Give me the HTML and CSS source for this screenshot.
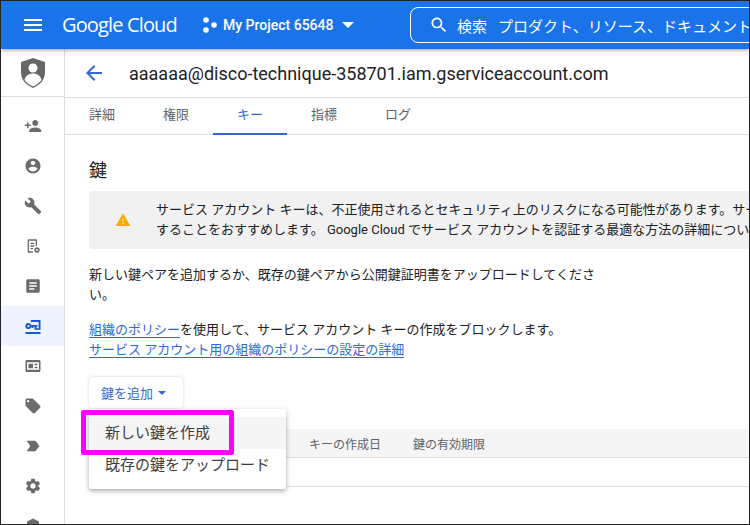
FILE: index.html
```html
<!DOCTYPE html>
<html lang="ja">
<head>
<meta charset="UTF-8">
<title>Service account keys</title>
<link rel="stylesheet" href="styles.css">
</head>
<body>
<div class="frame">
  <header class="topbar">
    <svg class="menu-icon" viewBox="0 0 18 12"><path d="M0 0h18v2H0zM0 5h18v2H0zM0 10h18v2H0z"/></svg>
    <span class="logo">Google Cloud</span>
    <svg class="project-icon" viewBox="0 0 14 16"><circle cx="3" cy="3" r="2.8"/><circle cx="11" cy="8" r="2.8"/><circle cx="3" cy="13" r="2.8"/></svg>
    <span class="project-name">My Project 65648</span>
    <span class="caret-white"></span>
    <div class="search">
      <svg class="search-icon" viewBox="0 0 24 24"><path d="M15.5 14h-.79l-.28-.27C15.41 12.59 16 11.11 16 9.5 16 5.91 13.09 3 9.5 3S3 5.91 3 9.5 5.91 16 9.5 16c1.61 0 3.09-.59 4.23-1.57l.27.28v.79l5 4.99L20.49 19l-4.99-5zm-6 0C7.01 14 5 11.99 5 9.5S7.01 5 9.5 5 14 7.01 14 9.5 11.99 14 9.5 14z"/></svg>
      <span class="search-label">検索</span>
      <span>プロダクト、リソース、ドキュメント</span>
    </div>
  </header>

  <div class="columns">
    <nav class="sidebar">
      <div class="side-head">
        <svg width="28" height="32" viewBox="0 0 28 32"><path fill="#666" d="M14 1 2 5v10c0 8 5 13 12 16 7-3 12-8 12-16V5z"/><circle cx="14" cy="11" r="4.500" fill="#fff"/><path fill="#fff" d="M5.500 23c1-5 5-6.500 8.500-6.500s7.500 1.500 8.500 6.500c-2 2.800-5 5-8.500 6.500-3.500-1.500-6.500-3.700-8.500-6.500z"/></svg>
      </div>
      <a class="side-item"><svg viewBox="0 0 24 24"><path d="M15 12c2.210 0 4-1.790 4-4s-1.790-4-4-4-4 1.790-4 4 1.790 4 4 4zm-9-2V7H4v3H1v2h3v3h2v-3h3v-2H6zm9 4c-2.670 0-8 1.340-8 4v2h16v-2c0-2.660-5.330-4-8-4z"/></svg></a>
      <a class="side-item"><svg viewBox="0 0 24 24"><path d="M12 2C6.480 2 2 6.480 2 12s4.480 10 10 10 10-4.480 10-10S17.520 2 12 2zm0 3c1.660 0 3 1.340 3 3s-1.340 3-3 3-3-1.340-3-3 1.340-3 3-3zm0 14.200c-2.500 0-4.710-1.280-6-3.220.03-1.990 4-3.080 6-3.080 1.990 0 5.970 1.090 6 3.080-1.290 1.940-3.500 3.220-6 3.220z"/></svg></a>
      <a class="side-item"><svg viewBox="0 0 24 24"><path d="M22.700 19l-9.100-9.100c.9-2.300.4-5-1.500-6.900-2-2-5-2.400-7.400-1.300L9 6 6 9 1.600 4.700C.4 7.100.9 10.100 2.900 12.100c1.900 1.900 4.600 2.400 6.900 1.500l9.100 9.100c.4.4 1 .4 1.400 0l2.300-2.300c.5-.4.5-1.100.1-1.400z"/></svg></a>
      <a class="side-item"><svg class="small" viewBox="0 0 24 24"><path fill-rule="evenodd" d="M5 2h12c.6 0 1 .4 1 1v9h-2V4H6v16h6v2H5c-.6 0-1-.4-1-1V3c0-.6.4-1 1-1zm3 5h6v2H8zm0 4h6v2H8zm0 4h4v2H8zm10-1a4 4 0 1 1 0 8 4 4 0 0 1 0-8zm0 2.500a1.500 1.500 0 1 0 0 3 1.500 1.500 0 0 0 0-3z"/></svg></a>
      <a class="side-item"><svg viewBox="0 0 24 24"><path d="M19 3H5c-1.100 0-2 .9-2 2v14c0 1.100.9 2 2 2h14c1.100 0 2-.9 2-2V5c0-1.100-.9-2-2-2zm-5 14H7v-2h7v2zm3-4H7v-2h10v2zm0-4H7V7h10v2z"/></svg></a>
      <a class="side-item active"><svg viewBox="0 0 24 24"><path fill-rule="evenodd" d="M2 20h20v2.500H2zM9 4h13v13h-8v-2h5.500V6.500H9zM6 8a4 4 0 0 1 3.700 2.500H18v2.500h-1.500v2h-2.500v-2h-1.500v1.500H10v-1.500h-.3A4 4 0 1 1 6 8zm0 2.500a1.500 1.500 0 1 0 0 3 1.500 1.500 0 0 0 0-3z"/></svg></a>
      <a class="side-item"><svg viewBox="0 0 24 24"><path fill-rule="evenodd" d="M4 4h16c1.100 0 2 .9 2 2v12c0 1.100-.9 2-2 2H4c-1.100 0-2-.9-2-2V6c0-1.100.9-2 2-2zm0 3v10h16V7zm2 2h6v6H6zm8 0h4v2h-4zm0 4h4v2h-4z"/></svg></a>
      <a class="side-item"><svg viewBox="0 0 24 24"><path d="M21.410 11.580l-9-9C12.050 2.220 11.550 2 11 2H4c-1.100 0-2 .9-2 2v7c0 .55.22 1.050.59 1.420l9 9c.36.36.86.58 1.410.58.55 0 1.050-.22 1.410-.59l7-7c.37-.36.59-.86.59-1.410 0-.55-.23-1.060-.59-1.420zM5.500 7C4.670 7 4 6.330 4 5.500S4.670 4 5.500 4 7 4.670 7 5.500 6.330 7 5.500 7z"/></svg></a>
      <a class="side-item"><svg viewBox="0 0 24 24"><path d="M3.500 18.990l11 .01c.67 0 1.270-.33 1.630-.84L20.500 12l-4.370-6.160c-.36-.51-.96-.84-1.630-.84l-11 .01L8.340 12 3.500 18.990z"/></svg></a>
      <a class="side-item"><svg viewBox="0 0 24 24"><path d="M19.140 12.940c.04-.3.06-.61.06-.94 0-.32-.02-.64-.07-.94l2.030-1.580c.18-.14.23-.41.12-.61l-1.920-3.320c-.12-.22-.37-.29-.59-.22l-2.390.96c-.5-.38-1.030-.7-1.620-.94l-.36-2.540c-.04-.24-.24-.41-.48-.41h-3.840c-.24 0-.43.17-.47.41l-.36 2.540c-.59.24-1.130.57-1.620.94l-2.390-.96c-.22-.08-.47 0-.59.22L2.740 8.870c-.12.21-.08.47.12.61l2.030 1.580c-.05.3-.09.63-.09.94s.02.64.07.94l-2.030 1.580c-.18.14-.23.41-.12.61l1.920 3.320c.12.22.37.29.59.22l2.390-.96c.5.38 1.030.7 1.620.94l.36 2.540c.05.24.24.41.48.41h3.840c.24 0 .44-.17.47-.41l.36-2.540c.59-.24 1.130-.56 1.620-.94l2.390.96c.22.08.47 0 .59-.22l1.920-3.320c.12-.22.07-.47-.12-.61l-2.010-1.580zM12 15.600c-1.980 0-3.600-1.620-3.600-3.600s1.620-3.600 3.600-3.600 3.600 1.620 3.600 3.600-1.620 3.600-3.600 3.600z"/></svg></a>
      <a class="side-item"><svg viewBox="0 0 24 24"><path d="M12 2 4 6v6c0 5 3.400 9.500 8 11 4.600-1.500 8-6 8-11V6z"/></svg></a>
    </nav>

    <main class="main">
      <div class="title-row">
        <svg class="back" viewBox="0 0 24 24"><path d="M20 11H7.830l5.590-5.590L12 4l-8 8 8 8 1.410-1.410L7.830 13H20v-2z"/></svg>
        <h1 class="title">aaaaaa@disco-technique-358701.iam.gserviceaccount.com</h1>
      </div>

      <div class="tabs">
        <a class="tab">詳細</a>
        <a class="tab">権限</a>
        <a class="tab selected">キー</a>
        <a class="tab">指標</a>
        <a class="tab">ログ</a>
      </div>

      <section class="content">
        <h2 class="heading">鍵</h2>

        <div class="warning">
          <svg class="warning-icon" viewBox="0 0 24 24"><path d="M1 21h22L12 2 1 21zm12-3h-2v-2h2v2zm0-4h-2v-4h2v4z"/></svg>
          <p>サービス アカウント キーは、不正使用されるとセキュリティ上のリスクになる可能性があります。サービス アカウント キーをダウンロードせず、<br>することをおすすめします。 Google Cloud でサービス アカウントを認証する最適な方法の詳細についてご確認ください。</p>
        </div>

        <p class="intro">新しい鍵ペアを追加するか、既存の鍵ペアから公開鍵証明書をアップロードしてください。</p>

        <p class="policy"><a class="link">組織のポリシー</a>を使用して、サービス アカウント キーの作成をブロックします。<br><a class="link">サービス アカウント用の組織のポリシーの設定の詳細</a></p>

        <div class="add-wrap">
          <button class="add-btn">鍵を追加<span class="caret-blue"></span></button>
          <div class="dropdown">
            <div class="dropdown-item hover">新しい鍵を作成</div>
            <div class="dropdown-item">既存の鍵をアップロード</div>
          </div>
          <div class="highlight"></div>
        </div>

        <div class="key-table">
          <div class="key-head">
            <span class="col-created">キーの作成日</span>
            <span class="col-expire">鍵の有効期限</span>
          </div>
          <div class="key-row"></div>
        </div>
      </section>
    </main>
  </div>
</div>
</body>
</html>
```

FILE: styles.css
```css
* {
    box-sizing: border-box;
}

html, body {
    margin: 0;
    height: 100%;
    overflow: hidden;
}

body {
    font-family: Roboto, "Noto Sans CJK JP", sans-serif;
    color: #202124;
    background: #fff;
}

.frame {
    width: 750px;
    height: 525px;
    border: 1px solid #222;
    overflow: hidden;
    display: flex;
    flex-direction: column;
}

/* top bar */
.topbar {
    height: 48px;
    flex: none;
    background: #1a73e8;
    color: #fff;
    display: flex;
    align-items: center;
    padding-left: 23px;
    position: relative;
    box-shadow: 0 1px 4px rgba(0, 0, 0, 0.4);
    z-index: 2;
    white-space: nowrap;
}

.menu-icon {
    width: 18px;
    height: 12px;
    fill: #fff;
    flex: none;
}

.logo {
    font-family: "Open Sans", sans-serif;
    font-size: 20px;
    margin-left: 20px;
    margin-top: -2px;
    width: 116px;
    flex: none;
    letter-spacing: -0.85px;
}

.project-icon {
    width: 14px;
    height: 16px;
    fill: #fff;
    margin-left: 25px;
    flex: none;
}

.project-name {
    font-size: 14px;
    font-weight: 500;
    margin-left: 6px;
    width: 109px;
    flex: none;
}

.caret-white {
    border-left: 6px solid transparent;
    border-right: 6px solid transparent;
    border-top: 6px solid #fff;
    margin-left: 10px;
    flex: none;
}

.search {
    margin-left: 56px;
    width: 400px;
    height: 36px;
    flex: none;
    border: 1px solid #fff;
    border-radius: 8px;
    display: flex;
    align-items: center;
    padding-left: 18px;
    font-size: 15px;
}

.search-icon {
    width: 20px;
    height: 20px;
    fill: #fff;
    margin-right: 8px;
    flex: none;
}

.search-label {
    margin-right: 11px;
}

/* layout */
.columns {
    flex: 1;
    display: flex;
    min-height: 0;
}

.sidebar {
    width: 64px;
    flex: none;
    border-right: 1px solid #dadce0;
    overflow: hidden;
    background: #fff;
}

.side-head {
    height: 48px;
    display: flex;
    align-items: center;
    justify-content: center;
    border-bottom: 1px solid #dadce0;
    margin-bottom: 9px;
}

.side-item {
    height: 40px;
    display: flex;
    align-items: center;
    justify-content: center;
}

.side-item svg {
    width: 18px;
    height: 18px;
    fill: #6b6b6b;
}

.side-item svg.small {
    width: 16px;
    height: 16px;
}

.side-item.active {
    background: #eef3fd;
}

.side-item.active svg {
    fill: #1a56d6;
}

.main {
    flex: 1;
    min-width: 0;
    overflow: hidden;
}

.title-row {
    height: 49px;
    display: flex;
    align-items: center;
    border-bottom: 1px solid #dadce0;
    padding-left: 17px;
}

.back {
    width: 24px;
    height: 24px;
    fill: #3367d6;
    flex: none;
}

.title {
    font-size: 18px;
    font-weight: 400;
    margin: 0 0 0 23px;
    white-space: nowrap;
}

/* tabs */
.tabs {
    height: 37px;
    display: flex;
    border-bottom: 1px solid #dadce0;
}

.tab {
    width: 74px;
    text-align: center;
    font-size: 13px;
    line-height: 34px;
    color: #5f6368;
}

.tab.selected {
    color: #3367d6;
    border-bottom: 2px solid #3367d6;
    height: 37px;
}

.content {
    padding: 24px 0 0 24px;
}

.heading {
    font-size: 18px;
    font-weight: 400;
    line-height: 24px;
    margin: 0;
}

.warning {
    margin: 8px -20px 0 0;
    height: 58px;
    background: #f1f1f1;
    border-radius: 4px;
    display: flex;
    align-items: center;
    padding-left: 26px;
    white-space: nowrap;
    overflow: hidden;
}

.warning-icon {
    width: 16px;
    height: 16px;
    fill: #f9ab00;
    flex: none;
    margin-right: 25px;
}

.warning p {
    margin: 0;
    font-size: 13px;
    line-height: 20px;
}

.intro {
    width: 515px;
    margin: 16px 0 0;
    font-size: 13px;
    line-height: 20px;
}

.policy {
    margin: 15px 0 0;
    font-size: 13px;
    line-height: 20px;
    white-space: nowrap;
}

.link {
    color: #3367d6;
    border-bottom: 1px solid #3367d6;
}

/* add key button + menu */
.add-wrap {
    position: relative;
    margin-top: 17px;
    height: 31px;
}

.add-btn {
    width: 94px;
    height: 31px;
    padding: 0 0 0 12px;
    display: flex;
    align-items: center;
    background: #fff;
    border: none;
    border-radius: 4px;
    box-shadow: 0 0 3px rgba(60, 64, 67, 0.25);
    color: #3367d6;
    font-family: inherit;
    font-size: 13px;
}

.caret-blue {
    border-left: 4px solid transparent;
    border-right: 4px solid transparent;
    border-top: 4px solid #3367d6;
    margin-left: 5px;
}

.dropdown {
    position: absolute;
    left: 0;
    top: 32px;
    width: 197px;
    height: 80px;
    padding: 8px 0;
    background: #fff;
    box-shadow: 0 2px 5px rgba(60, 64, 67, 0.45);
    border-radius: 2px;
    z-index: 3;
}

.dropdown-item {
    height: 32px;
    line-height: 32px;
    padding-left: 16px;
    font-size: 15px;
    color: #3c4043;
    white-space: nowrap;
}

.dropdown-item.hover {
    background: #f5f5f5;
}

.highlight {
    position: absolute;
    left: -8px;
    top: 33px;
    width: 153px;
    height: 45px;
    border: 5px solid #ff00ff;
    border-radius: 2px;
    z-index: 4;
}

/* key table */
.key-table {
    margin: 21px -20px 0 0;
}

.key-head {
    height: 29px;
    background: #f5f5f5;
    border-bottom: 1px solid #dadce0;
    display: flex;
    align-items: center;
    font-size: 12px;
    color: #5f6368;
}

.col-created {
    margin-left: 220px;
}

.col-expire {
    margin-left: 32px;
}

.key-row {
    height: 29px;
    border-bottom: 1px solid #dadce0;
}
```
